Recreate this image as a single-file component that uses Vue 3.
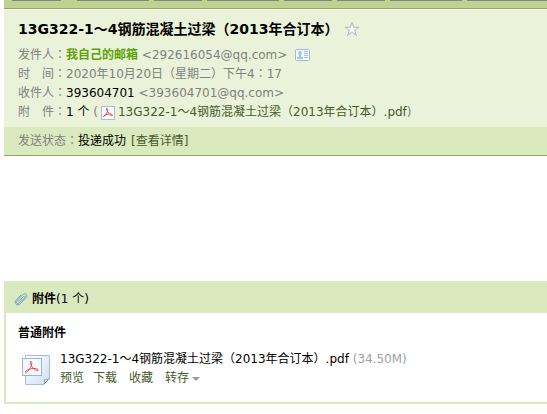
<script setup>
import { ref } from 'vue'

const title = '13G322-1～4钢筋混凝土过梁（2013年合订本）'
const fileName = title + '.pdf'
const starred = ref(false)
const tools = [49, 72, 48, 72, 48, 48, 72, 96]
</script>

<template>
  <main class="mail">
    <div class="toolbar" aria-hidden="true">
      <span v-for="(w, i) in tools" :key="i" class="tool" :class="{ first: i === 0 }" :style="{ width: w + 'px' }"></span>
    </div>

    <header class="head">
      <h1 class="title">
        <span>{{ title }}</span>
        <button class="star" type="button" aria-label="星标" :aria-pressed="starred" @click="starred = !starred">
          <svg width="16" height="16" viewBox="0 0 16 16">
            <path d="M8 1.5 9.700 6.200H15l-4.200 3.200 1.600 5L8 11.400l-4.400 3 1.600-5L1 6.200h5.300z" :fill="starred ? '#ffd45c' : '#f8faf8'" stroke="#b4b7c3" />
          </svg>
        </button>
      </h1>
      <dl class="meta">
        <div class="line">
          <dt>发件人<i>：</i></dt>
          <dd><b class="sender">我自己的邮箱</b> &lt;292616054@qq.com&gt;
            <svg class="card" width="15" height="12" viewBox="0 0 15 12">
              <rect x=".5" y=".5" width="14" height="11" rx="1" fill="#f3f8fb" stroke="#9dbbd9" />
              <path d="M2 10V8.5L4 7.4V6.5L3.400 5V3.200L4.200 2h1.600l.8 1.200V5L6 6.500v.9l2 1.100V10z" fill="#a3c3e5" />
              <path d="M9 2.500h4M9 4.500h4M9 6.500h4M9 8.500h4" stroke="#a3bfdf" />
            </svg>
          </dd>
        </div>
        <div class="line">
          <dt><span class="pair"><span>时</span><span>间</span></span><i>：</i></dt>
          <dd>2020年10月20日（星期二）下午4<i>：</i>17</dd>
        </div>
        <div class="line">
          <dt>收件人<i>：</i></dt>
          <dd><span class="dark">393604701</span> &lt;393604701@qq.com&gt;</dd>
        </div>
        <div class="line">
          <dt><span class="pair"><span>附</span><span>件</span></span><i>：</i></dt>
          <dd><span class="dark">1 个</span> (<svg class="pdf" width="14" height="14" viewBox="0 0 14 14">
              <rect x=".5" y=".5" width="13" height="13" fill="#fafbff" stroke="#a9bce0" />
              <path d="M5.500 2.500c2-.3 1.200 3-.1 5.100S2.500 11.500 2.500 10.500s3-2.500 5.500-2.500 3.500.5 3.500 1.300-1.500.4-2.700-.9S5.500 5 5.500 2.500z" fill="none" stroke="#d84b4b" />
            </svg><a class="link" href="#attachments">{{ fileName }}</a>)</dd>
        </div>
      </dl>
    </header>

    <div class="status">
      <span>发送状态<i>：</i></span><span class="dark">投递成功</span>
      <a class="link detail" href="#detail">[查看详情]</a>
    </div>

    <section id="attachments" class="attachments">
      <h2 class="attach-head">
        <svg width="14" height="14" viewBox="0 0 14 14" fill="none" stroke="#6f9fd2" stroke-linecap="round">
          <path d="M4.500 9.500 9.500 4.500c1-1 2.100.1 1.100 1.100L5.500 10.800c-1.900 1.900-4.200-.3-2.300-2.200L8.800 2.700c2.600-2.600 5.700.4 3.200 3L6.300 11.700c-3.100 3.100-7-.6-4-3.800L7 3" />
        </svg>
        <span><b>附件</b>(1 个)</span>
      </h2>
      <div class="attach-body">
        <h3 class="kind">普通附件</h3>
        <div class="file">
          <svg class="file-icon" width="28" height="30" viewBox="0 0 28 30">
            <defs>
              <linearGradient id="page" x1="0" y1="0" x2="1" y2="1">
                <stop offset="0" stop-color="#fff" />
                <stop offset="1" stop-color="#cfe0f4" />
              </linearGradient>
            </defs>
            <path d="M3.500.5h24v23l-6 6h-18z" fill="url(#page)" stroke="#a5bcdc" />
            <path d="M27.500 23.500c-2 1.500-4 1.500-5 1 .5 2 .2 4-1 5z" fill="#fff" stroke="#7f9fce" />
            <rect x=".5" y="3.500" width="19" height="17" fill="#f5f8fe" stroke="#9bb3dc" />
            <path d="M8.500 6.500c2-.5 1.500 4-.5 7s-4 5-4.500 3.700 4-3.500 7.500-3.700 5.500.7 5.300 1.700-2.300.5-4.300-1.300-4.500-5.300-3.500-7.400z" fill="none" stroke="#df5050" />
          </svg>
          <div>
            <p class="name">{{ fileName }} <span class="size">(34.50M)</span></p>
            <nav class="actions">
              <a href="#preview">预览</a>
              <a href="#download">下载</a>
              <a class="wide" href="#favorite">收藏</a>
              <a class="wide save" href="#save">转存<span class="caret"></span></a>
            </nav>
          </div>
        </div>
      </div>
    </section>
  </main>
</template>

<style>
body {
  margin: 0;
  background: #fff;
}
</style>

<style scoped>
.mail {
  padding-left: 4px;
  color: #808080;
  font: 12px/19px "DejaVu Sans", "Noto Sans CJK SC", sans-serif;
  overflow: hidden;
}
h1, h2, h3, p, dl, dd {
  margin: 0;
}
i {
  font-family: "Noto Sans CJK TC", sans-serif;
  font-style: normal;
  line-height: 1;
}
a {
  text-decoration: none;
}
.toolbar {
  display: flex;
  gap: 5px;
  height: 8px;
  padding-left: 8px;
  background: #bfd391;
  border-bottom: 1px solid #8eaa55;
}
.tool {
  flex: none;
  height: 1px;
  background: #858585;
}
.tool.first {
  margin-right: 11px;
}
.head {
  margin-top: 1px;
  padding: 8px 14px 5px;
  background: #eaf3d9;
}
.title {
  display: flex;
  align-items: center;
  gap: 6px;
  height: 22px;
  margin-bottom: 6px;
  color: #000;
  font-size: 14px;
  line-height: 22px;
  white-space: nowrap;
}
.star {
  display: flex;
  padding: 0;
  border: 0;
  background: none;
  cursor: pointer;
}
.line {
  display: flex;
  height: 19px;
  white-space: nowrap;
}
dt {
  width: 48px;
}
.pair {
  display: inline-flex;
  justify-content: space-between;
  width: 36px;
}
.sender {
  color: #5fa207;
}
.dark {
  color: #000;
}
.link {
  color: #46592a;
}
.card {
  margin-left: 4px;
  vertical-align: -2px;
}
.pdf {
  margin: 0 3px;
  vertical-align: -4px;
}
.status {
  display: flex;
  padding: 5px 14px 4px;
  background: #daeabe;
  border-bottom: 1px solid #8eaa55;
}
.detail {
  margin-left: 5px;
}
.attachments {
  margin-top: 125px;
  border: 2px solid #daeabe;
  border-top: 0;
  border-right: 0;
}
.attach-head {
  display: flex;
  align-items: center;
  gap: 4px;
  height: 32px;
  padding: 4px 8px 0;
  box-sizing: border-box;
  background: #daeabe;
  color: #000;
  font-size: 12px;
  font-weight: 400;
}
.attach-body {
  padding: 11px 12px 14px;
}
.kind {
  margin-bottom: 7px;
  color: #000;
  font-size: 12px;
}
.file {
  display: flex;
  gap: 10px;
  padding-left: 4px;
}
.file-icon {
  flex: none;
  margin-top: 5px;
}
.name {
  color: #000;
  white-space: nowrap;
}
.size {
  color: #a0a0a0;
}
.actions {
  display: flex;
  gap: 9px;
}
.actions a {
  color: #46592a;
}
.wide {
  margin-left: 3px;
}
.save {
  display: flex;
  align-items: center;
  gap: 3px;
}
.caret {
  border: 4px solid transparent;
  border-top-color: #999;
  border-bottom: 0;
}
</style>
